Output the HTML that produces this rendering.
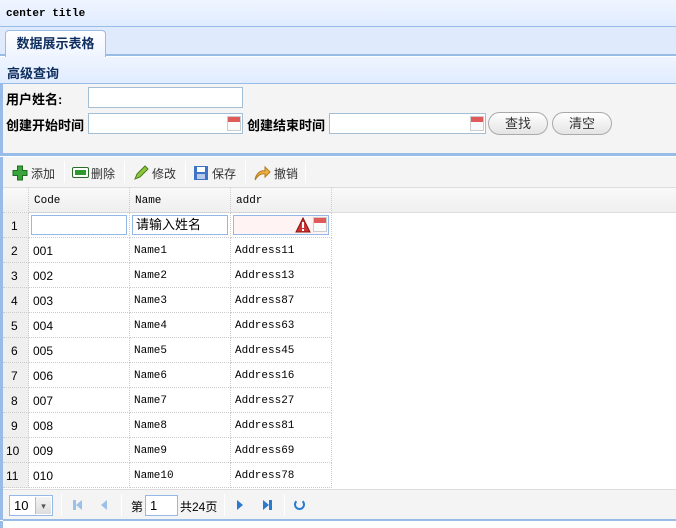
<!DOCTYPE html>
<html><head><meta charset="utf-8"><style>
*{margin:0;padding:0;box-sizing:border-box}
body{width:676px;height:528px;overflow:hidden;background:#fff;font-family:"Liberation Sans","Noto Sans CJK SC",sans-serif;font-size:12px;position:relative;color:#000}
.a{position:absolute}
.title{left:0;top:0;width:676px;height:27px;background:linear-gradient(#eff5ff,#e0ecff);border-bottom:1px solid #99bbe8;font:bold 11px "Liberation Mono",monospace;padding:8px 0 0 6px}
.tabs{left:0;top:27px;width:676px;height:29px;background:#dfeafc;border-bottom:2px solid #99bbe8}
.tab{left:5px;top:3px;width:101px;height:27px;border:1px solid #99bbe8;border-bottom:none;border-radius:4px 4px 0 0;background:linear-gradient(#fff,#eef4ff);font-weight:bold;font-size:13px;text-align:center;line-height:26px;color:#0e2d5f}
.hdr{left:0;top:57px;width:676px;height:27px;background:linear-gradient(#eff5ff,#e0ecff);border-bottom:1px solid #99bbe8;font-weight:bold;font-size:13px;color:#0e2d5f;padding:6px 0 0 7px}
.form{left:0;top:84px;width:676px;height:72px;background:#f4f4f4;border-bottom:3px solid #99bbe8;border-left:3px solid #99bbe8}
.lbl{font-weight:bold;font-size:13px}
.in{background:#fff;border:1px solid #a4bed4;height:21px}
.cal{width:14px;height:15px;border:1px solid #ccc;background:linear-gradient(#e05a5a 0 5px,#fafafa 5px)}
.btn{height:23px;border:1px solid #aaa;border-radius:12px;background:linear-gradient(#fff,#e4e4e4);text-align:center;line-height:21px;font-size:13px;color:#333}
.grid{left:0;top:157px;width:676px;height:363px;border-left:3px solid #99bbe8}
.tb{left:3px;top:157px;width:673px;height:31px;background:#f4f4f4;border-bottom:1px solid #ddd}
.tbi{top:8px;font-size:12px;color:#333}
.sep{top:4px;width:1px;height:22px;background:#ddd;border-right:1px solid #fff}
.gh{left:3px;top:188px;width:673px;height:25px;background:linear-gradient(#f9f9f9,#efefef);border-bottom:1px solid #ddd}
.c{position:absolute;height:25px;border-right:1px dotted #ccc;border-bottom:1px dotted #ccc;padding-left:4px;line-height:26px;font-family:"Liberation Mono",monospace;font-size:11px}
.rn{background:#efefef;font-family:"Liberation Sans",sans-serif;font-size:12px;padding-left:8px}
.pg{left:3px;top:489px;width:673px;height:32px;background:#f4f4f4;border-top:1px solid #ddd;border-bottom:2px solid #99bbe8}
.bot{left:0;top:521px;width:676px;height:7px;background:#fff;border-left:3px solid #99bbe8}
</style></head><body>
<div class="a title">center title</div>
<div class="a tabs"><div class="a tab">数据展示表格</div></div>
<div class="a hdr">高级查询</div>
<div class="a form">
 <div class="a lbl" style="left:3px;top:5px">用户姓名:</div>
 <div class="a in" style="left:85px;top:3px;width:155px"></div>
 <div class="a lbl" style="left:3px;top:31px">创建开始时间</div>
 <div class="a in" style="left:85px;top:29px;width:155px"><div class="a cal" style="right:1px;top:2px"></div></div>
 <div class="a lbl" style="left:244px;top:31px">创建结束时间</div>
 <div class="a in" style="left:326px;top:29px;width:157px"><div class="a cal" style="right:1px;top:2px"></div></div>
 <div class="a btn" style="left:485px;top:28px;width:60px">查找</div>
 <div class="a btn" style="left:549px;top:28px;width:60px">清空</div>
</div>
<div class="a grid"></div>
<div class="a tb">
 <div class="a" style="left:9px;top:8px;width:16px;height:16px"><svg width="16" height="16"><path d="M5.5 1h5v4.5h4.5v5h-4.5v4.5h-5v-4.5h-4.5v-5h4.5z" fill="#3aa53a" stroke="#1f6e1f"/></svg></div>
 <div class="a tbi" style="left:28px">添加</div>
 <div class="a sep" style="left:61px"></div>
 <div class="a" style="left:69px;top:10px;width:17px;height:11px;border:1px solid #2a6b2a;border-radius:2px;background:#fff;padding:2px"><div style="background:#2e9a2e;height:5px"></div></div>
 <div class="a tbi" style="left:88px">删除</div>
 <div class="a sep" style="left:121px"></div>
 <div class="a" style="left:130px;top:8px"><svg width="16" height="16"><path d="M2 14l2-5 8-8 3 3-8 8z" fill="#8cc63f" stroke="#4a7a1a"/></svg></div>
 <div class="a tbi" style="left:149px">修改</div>
 <div class="a sep" style="left:182px"></div>
 <div class="a" style="left:190px;top:8px"><svg width="16" height="16"><rect x="1" y="1" width="14" height="14" fill="#3f73c8"/><rect x="4" y="2" width="8" height="5" fill="#fff"/><rect x="4" y="9" width="8" height="5" fill="#b7cbe8"/></svg></div>
 <div class="a tbi" style="left:209px">保存</div>
 <div class="a sep" style="left:242px"></div>
 <div class="a" style="left:250px;top:8px"><svg width="18" height="16"><path d="M2 15C3 8 8 5 12 6V2l5 5-5 5V9C8 8 5 10 2 15z" fill="#f0b040" stroke="#b07a20"/></svg></div>
 <div class="a tbi" style="left:271px">撤销</div>
 <div class="a sep" style="left:302px"></div>
</div>
<div class="a gh"></div>
<div class="a" style="left:3px;top:188px">
 <div class="c rn" style="left:0;top:0;width:26px;height:25px;background:linear-gradient(#f9f9f9,#efefef)"></div>
 <div class="c" style="left:26px;top:0;width:101px;padding-left:5px">Code</div>
 <div class="c" style="left:127px;top:0;width:101px;padding-left:5px">Name</div>
 <div class="c" style="left:228px;top:0;width:101px;padding-left:5px">addr</div>
</div>
<div class="a" style="left:3px;top:213px" id="rows">
 <div class="c rn" style="left:0;top:0;width:26px">1</div>
 <div class="c" style="left:26px;top:0;width:101px;padding:2px 2px"><div class="in" style="height:20px;border-color:#95b8e7"></div></div>
 <div class="c" style="left:127px;top:0;width:101px;padding:2px 2px"><div class="in" style="height:20px;border-color:#95b8e7;font-family:'Liberation Sans','Noto Sans CJK SC',sans-serif;font-size:13px;line-height:18px;padding-left:3px">请输入姓名</div></div>
 <div class="c" style="left:228px;top:0;width:101px;padding:2px 2px"><div class="in" style="height:20px;border-color:#95b8e7;background:#fff3f3;position:relative"><svg class="a" style="right:17px;top:1px" width="16" height="16"><path d="M8 1L15 15H1z" fill="#c33" stroke="#811"/><rect x="7" y="5" width="2" height="6" fill="#fff"/><rect x="7" y="12" width="2" height="2" fill="#fff"/></svg><div class="a cal" style="right:1px;top:1px"></div></div></div>
</div>
<script>
var d=[["001","Name1","Address11"],["002","Name2","Address13"],["003","Name3","Address87"],["004","Name4","Address63"],["005","Name5","Address45"],["006","Name6","Address16"],["007","Name7","Address27"],["008","Name8","Address81"],["009","Name9","Address69"],["010","Name10","Address78"]];
var h="";d.forEach(function(r,i){var t=25*(i+1);h+='<div class="c rn" style="left:0;top:'+t+'px;width:26px;padding-left:'+(i>=8?3:8)+'px">'+(i+2)+'</div><div class="c" style="left:26px;top:'+t+'px;width:101px;font-family:\'Liberation Sans\',sans-serif;font-size:12px">'+r[0]+'</div><div class="c" style="left:127px;top:'+t+'px;width:101px">'+r[1]+'</div><div class="c" style="left:228px;top:'+t+'px;width:101px">'+r[2]+'</div>';});
document.getElementById("rows").insertAdjacentHTML("beforeend",h);
</script>
<div class="a pg">
 <div class="a in" style="left:6px;top:5px;width:44px;height:21px;border-color:#95b8e7;font-size:13px;padding-left:4px;line-height:19px">10<div class="a" style="right:1px;top:1px;width:16px;height:17px;background:linear-gradient(#f4f4f4,#ddd);border-left:1px solid #bbb;font-size:9px;text-align:center;color:#555">▾</div></div>
 <div class="a sep" style="left:58px"></div>
 <div class="a" style="left:70px;top:10px;width:3px;height:10px;background:#9bc1e8"></div>
 <div class="a" style="left:73px;top:10px;width:0;height:0;border:5px solid transparent;border-right:6px solid #9bc1e8;border-left:0"></div>
 <div class="a" style="left:98px;top:10px;width:0;height:0;border:5px solid transparent;border-right:6px solid #9bc1e8;border-left:0"></div>
 <div class="a sep" style="left:118px"></div>
 <div class="a" style="left:128px;top:8px;font-size:12px">第</div>
 <div class="a in" style="left:142px;top:5px;width:33px;height:21px;border-color:#95b8e7;padding-left:4px;line-height:19px;font-size:13px">1</div>
 <div class="a" style="left:177px;top:8px;font-size:12px">共24页</div>
 <div class="a sep" style="left:221px"></div>
 <div class="a" style="left:234px;top:10px;width:0;height:0;border:5px solid transparent;border-left:6px solid #2a7bd0;border-right:0"></div>
 <div class="a" style="left:260px;top:10px;width:0;height:0;border:5px solid transparent;border-left:6px solid #2a7bd0;border-right:0"></div>
 <div class="a" style="left:266px;top:10px;width:3px;height:10px;background:#2a7bd0"></div>
 <div class="a sep" style="left:281px"></div>
 <div class="a" style="left:291px;top:9px;width:11px;height:11px;border:2px solid #2a7bd0;border-top-color:transparent;border-radius:50%"></div>
</div>
<div class="a bot"></div>
</body></html>
